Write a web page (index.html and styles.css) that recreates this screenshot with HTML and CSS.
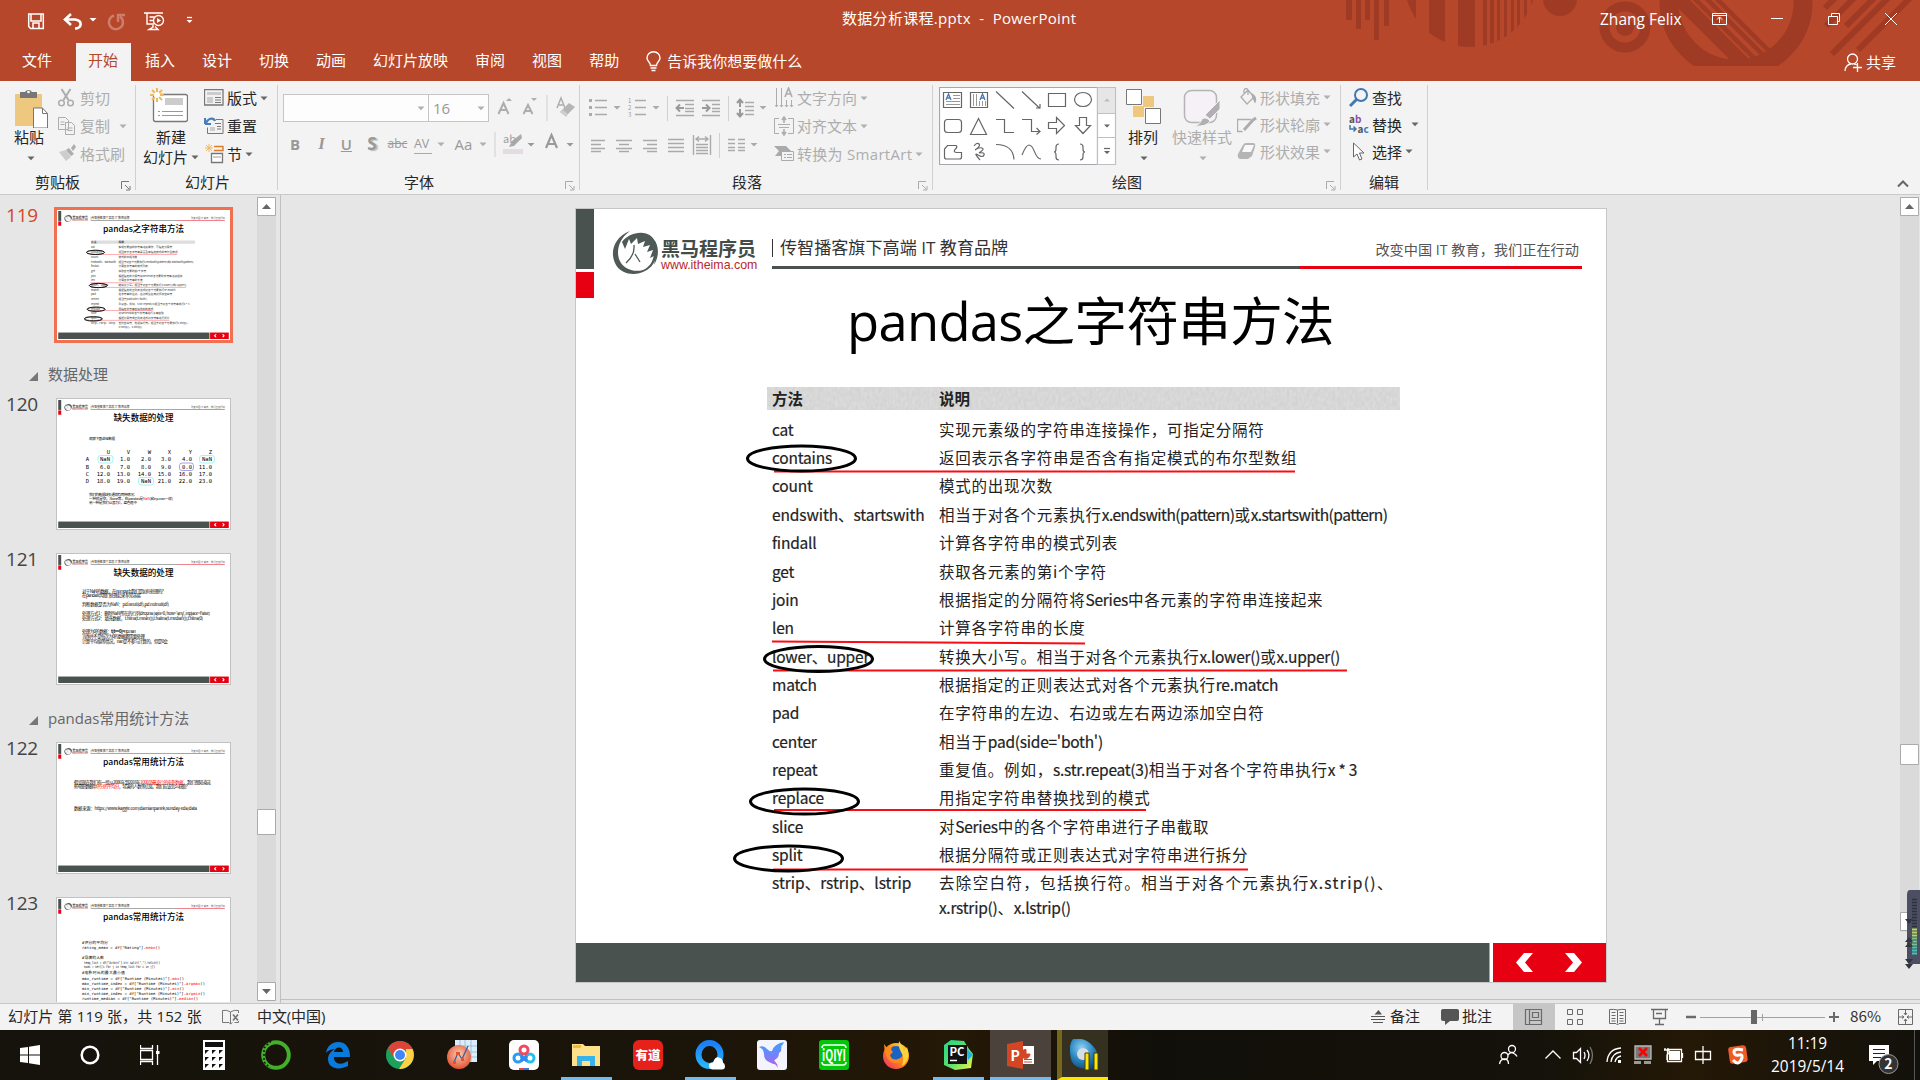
FILE: index.html
```html
<!DOCTYPE html>
<html lang="zh-CN">
<head>
<meta charset="utf-8">
<title>数据分析课程.pptx - PowerPoint</title>
<link rel="stylesheet" href="styles.css">
</head>
<body>
<svg class="defs" width="0" height="0">
  <defs>
    <linearGradient id="gBlue" x1="0" y1="0" x2="0" y2="1"><stop offset="0" stop-color="#1b7ff5"/><stop offset="1" stop-color="#29b4fb"/></linearGradient>
    <linearGradient id="gBird" x1="0" y1="0" x2="0" y2="1"><stop offset="0" stop-color="#3aa0ff"/><stop offset="1" stop-color="#a06bf5"/></linearGradient>
    <linearGradient id="gFox" x1="1" y1="0" x2="0" y2="1"><stop offset="0" stop-color="#ffe23a"/><stop offset=".5" stop-color="#ff8a16"/><stop offset="1" stop-color="#f0207a"/></linearGradient>
    <linearGradient id="gPy" x1="0" y1="0" x2="1" y2="1"><stop offset="0" stop-color="#21d789"/><stop offset=".55" stop-color="#5fe06a"/><stop offset="1" stop-color="#fcf84a"/></linearGradient>
    <radialGradient id="gAudio" cx=".4" cy=".3" r=".8"><stop offset="0" stop-color="#8ed0f2"/><stop offset=".5" stop-color="#2a86c0"/><stop offset="1" stop-color="#0b3f70"/></radialGradient>
    <radialGradient id="gGraph" cx=".5" cy=".4" r=".6"><stop offset="0" stop-color="#f9cdb8"/><stop offset="1" stop-color="#e2532f"/></radialGradient>
    <clipPath id="stripeClip"><circle cx="130" cy="-18.7" r="65.7"/></clipPath>
    <clipPath id="ringClip"><circle cx="396" cy="2" r="58"/></clipPath>
    <filter id="paper" x="0" y="0" width="1" height="1"><feTurbulence type="fractalNoise" baseFrequency=".35 .2" numOctaves="2" seed="4"/><feColorMatrix values="0 0 0 0 .5  0 0 0 0 .5  0 0 0 0 .5  .55 0 0 0 -.12"/></filter>
  </defs>
  <symbol id="frame" viewBox="0 0 1030 773">
    <rect width="18" height="60" fill="#4a5250"/><rect y="63" width="18" height="26" fill="#e60012"/>
    <path d="M54 22C38 28 33 44 40 56C46 66 60 67 69 62C80 57 84 42 79 32L77 38C80 48 75 58 67 61C57 64 46 59 43 50C40 40 44 29 54 22z" fill="#4f5957"/>
    <path d="M46 33C52 24 68 20 76 28C83 35 84 46 78 56L80 46L74 49L77 41L71 43L74 36L67 38L69 32L62 35L61 29L55 35L53 30L49 40z" fill="#4f5957"/>
    <path d="M58 36Q59 46 50 54M59 45L64 53" fill="none" stroke="#4f5957" stroke-width="1.300"/>
    <rect x="196" y="57" width="528" height="3" fill="#4a5250"/><rect x="723" y="57" width="283" height="3" fill="#e60012"/>
    <rect y="734" width="913.5" height="39" fill="#4a5250"/><rect x="917" y="734" width="113" height="39" fill="#e60012"/>
    <path d="M948 744h9l-8 9.500 8 9.500h-9l-8-9.500zM989 744h9l8 9.500-8 9.500h-9l8-9.500z" fill="#fff"/>
  </symbol>
  <symbol id="marks" viewBox="0 0 1030 773">
    <path d="M198 262.500H719M196 432.500L509 434.500M197 461.500H771M198 601H570M197 660.500H672" stroke="#f80d14" stroke-width="2" fill="none"/>
    <g fill="none" stroke="#000" stroke-width="3"><ellipse cx="225.500" cy="249.500" rx="54" ry="12.500"/><ellipse cx="242.500" cy="450" rx="54" ry="12.500"/><ellipse cx="228.500" cy="592.500" rx="54" ry="12.500"/><ellipse cx="212.500" cy="649.500" rx="54" ry="12.500"/></g>
  </symbol>
  <symbol id="launch" viewBox="0 0 10 10"><path d="M.5 8V.5H8M4 4l4 4M9 5v4H5" fill="none" stroke="currentColor"/></symbol>
  <symbol id="dd" viewBox="0 0 8 5"><path d="M.5.500h7L4 4.200z" fill="currentColor"/></symbol>
</svg>

<header class="titlebar">
  <svg class="art" width="580" height="66" viewBox="0 0 580 66">
    <g fill="#9f3b24">
      <path d="M6 0h6v20H6zM16 0h5v29h-5zM25 0h5v20h-5zM34 0h5v40h-5zM44 0h5v26h-5z"/>
      <path clip-path="url(#stripeClip)" d="M67 0h9v50h-9zM89 0h16v50H89zM118 0h17v50h-17zM143 0h4v50h-4zM150 0h4v50h-4zM157 0h3v50h-3zM164 0h3v50h-3zM171 0h3v50h-3zM177 0h3v50h-3zM184 0h3v50h-3zM191 0h3v50h-3z"/>
      <circle cx="220" cy="-1" r="17"/><circle cx="285" cy="27" r="9"/>
    </g>
    <g fill="none" stroke="#9f3b24">
      <circle cx="285" cy="27" r="20.500" stroke-width="10"/><circle cx="396" cy="2" r="67" stroke-width="19"/>
      <g clip-path="url(#ringClip)"><path d="M320-20L410 70" stroke-width="14"/><path d="M336-20L426 70M348-20L438 70M358-20L448 70" stroke-width="4.500"/></g>
      <path d="M492 54L560-14M518 50L582-14M506 26L546-14M486 26L530-18M485 8L510-17" stroke-width="6"/>
    </g>
  </svg>
  <div class="titlerow">
    <svg width="200" height="38" viewBox="0 0 200 38" fill="none" stroke="#fff">
      <path d="M28.700 14h14.600v14.500H30.500l-1.800-2zM31 14v7h10v-7M33 28v-5h6v5" stroke-width="1.500"/>
      <path d="M71 14l-6 5.500 6 5.500M65.500 19.500H75c8 1 7 9 0 9" stroke-width="2.600"/>
      <path d="M89.500 18h7l-3.500 3.500z" fill="#fff" stroke="none"/>
      <path d="M114 15.500a7 7 0 1 0 6 1M118 22v-7h7" stroke-width="2.500" opacity=".3"/>
      <path d="M144 13h19M147 13v11h7M149.500 17h5M149.500 20.500h4M153 25v2l-4 2.500h9l-3-3" stroke-width="1.400"/><circle cx="158.500" cy="20.500" r="5" stroke-width="1.300"/><path d="M157 18v5l4-2.500z" fill="#fff" stroke="none"/>
      <path d="M187 17.500h5" stroke-width="1.300"/><path d="M186.500 20h6l-3 3z" fill="#fff" stroke="none"/>
    </svg>
    <span class="doc">数据分析课程.pptx&nbsp; -&nbsp; PowerPoint</span>
    <span class="user">Zhang Felix</span>
    <svg class="win" width="200" height="38" viewBox="0 0 200 38" fill="none" stroke="#fff">
      <path d="M2.500 13.500h14v11h-14zM2.500 15.500h14M9.500 23v-6M7 19.500l2.500-2.500 2.500 2.500M61 18.500h12M118.500 16.500h9v8h-9zM121.500 16v-2.500h8v8h-2M175 13l12 12M187 13l-12 12"/>
    </svg>
  </div>
  <nav class="tabs">
    <span class="tab file">文件</span><span class="tab on">开始</span><span class="tab">插入</span><span class="tab">设计</span><span class="tab">切换</span><span class="tab">动画</span><span class="tab">幻灯片放映</span><span class="tab">审阅</span><span class="tab">视图</span><span class="tab">帮助</span>
    <svg class="bulb" width="15" height="21" viewBox="0 0 15 21" fill="none" stroke="#fff" stroke-width="1.400"><path d="M4.500 14.500C4.500 11 1 10.500 1 7a6.500 6.300 0 0 1 13 0c0 3.500-3.500 4-3.500 7.500zM4.500 17h6M5.500 19.500h4"/></svg>
    <span class="tell">告诉我你想要做什么</span>
    <span class="share"><svg width="19" height="19" viewBox="0 0 19 19" fill="none" stroke="#fff" stroke-width="1.300"><circle cx="8.500" cy="6" r="5"/><path d="M1 18c0-4 3-7 6-7M10 11l3 1M13.500 10v9M9 14.500h9"/></svg>共享</span>
  </nav>
</header>

<section class="ribbon">
  <div class="group" style="width:136px">
    <div class="body">
      <div class="big" style="width:58px">
        <svg width="36" height="40" viewBox="0 0 36 40"><path d="M1 6h27v32H1z" fill="#edc87e"/><path d="M6 4h5a4 4 0 0 1 7 0h5v6H6z" fill="#777"/><circle cx="14.500" cy="4" r="1.300" fill="#fff"/><path d="M19.500 20h9l5 5.500V40h-14z" fill="#fff" stroke="#777"/><path d="M28.500 20v5.500h5" fill="none" stroke="#777"/></svg>
        <span>粘贴</span><svg class="dd low" width="8" height="5"><use href="#dd"/></svg>
      </div>
      <div class="col off">
        <div><svg width="22" height="20" viewBox="0 0 22 20" fill="none" stroke="currentColor" stroke-width="1.500"><circle cx="3.500" cy="15" r="2.800"/><circle cx="12.500" cy="15" r="2.800"/><path d="M3.500 1l7 11M12.500 1l-7 11" stroke-width="2"/></svg>剪切</div>
        <div><svg width="22" height="20" viewBox="0 0 22 20" fill="#f3f3f3" stroke="currentColor"><path d="M.5 1.500h7l3 3v9H.500zM7.500 6.500h6l3 3v9h-9z"/><path d="M2.500 6h4M2.500 8.500h4M9.500 12h5M9.500 14.500h5"/></svg>复制<svg class="dd gap" width="8" height="5"><use href="#dd"/></svg></div>
        <div><svg width="22" height="20" viewBox="0 0 22 20" fill="currentColor"><path d="M1 8l7 9 5-4-5-7z" opacity=".55"/><path d="M8 6l3-2 5 6-3 2zM13 4l3-4 2 3-3 4z"/></svg>格式刷</div>
      </div>
    </div>
    <div class="label" style="padding-left:35px">剪贴板</div><svg class="launch" width="10" height="10"><use href="#launch"/></svg>
  </div>
  <div class="group slides" style="width:142px">
    <div class="body">
      <div class="big" style="width:60px">
        <svg width="38" height="40" viewBox="0 0 38 40"><rect x="3.500" y="6.500" width="34" height="27" rx="2" fill="#fff" stroke="#777" stroke-width="1.300"/><path d="M15 10h18v7H15z" fill="#ccc"/><path d="M8 23.500h2M12 23.500h21M8 27.500h2M12 27.500h21" stroke="#999"/><path d="M7 0v14M0 7h14M2 2l10 10M12 2L2 12" stroke="#f0b95e" stroke-width="2"/><circle cx="7" cy="7" r="3" fill="#fff"/></svg>
        <span>新建</span><span class="two">幻灯片<svg class="dd" width="8" height="5"><use href="#dd"/></svg></span>
      </div>
      <div class="col">
        <div><svg width="23" height="18" viewBox="0 0 23 18" fill="none" stroke="#777"><path d="M.5.500h18.500v15.500H.500z" stroke-width="1.300"/><path d="M3 3h14v3H3zM3 8h6v6H3z" fill="#ccc" stroke="none"/><path d="M11 8.500h6M11 11h6M11 13.500h6"/></svg>版式<svg class="dd" width="8" height="5"><use href="#dd"/></svg></div>
        <div><svg width="23" height="18" viewBox="0 0 23 18" fill="none" stroke="#777"><path d="M12 2.500h7v14H3.500v-6"/><path d="M6 10h5v4H6z" fill="#ccc" stroke="none"/><path d="M11 6.500h6M13 9.500h4M13 12h4"/><path d="M1 7V1M1 7h6M2 6c3-6 8-5 9-2" stroke="#4a7ebb" stroke-width="2.200"/></svg>重置</div>
        <div><svg width="23" height="20" viewBox="0 0 23 20" fill="none" stroke="#777"><path d="M10 2.500h9M10 6.500h9V2" stroke="#e07b28" stroke-width="1.400"/><path d="M7.500 9.500h11v9h-11z" fill="#fff" stroke-width="1.300"/><path d="M9 12h8v2H9z" fill="#ccc" stroke="none"/><path d="M5 0v8M1 4h8M2 1l6 6M8 1L2 7" stroke="#f0b95e"/></svg>节<svg class="dd" width="8" height="5"><use href="#dd"/></svg></div>
      </div>
    </div>
    <div class="label" style="padding-left:49px">幻灯片</div>
  </div>
  <div class="group" style="width:302px">
    <div class="body rows off">
      <div class="combos"><span class="combo" style="width:146px"><svg class="dd" width="8" height="5"><use href="#dd"/></svg></span><span class="combo" style="width:61px">16<svg class="dd" width="8" height="5"><use href="#dd"/></svg></span>
        <svg width="86" height="28" viewBox="0 0 86 28"><g fill="none" stroke="currentColor" stroke-width="2"><path d="M8.500 20l5-11 5 11M10 16h7M33.500 20l4.500-9 4.500 9M35 17h6"/></g><path d="M16 7l3-3 3 3zM41 4h6l-3 3z" fill="currentColor"/><path d="M57 1v26" stroke="#d0d0d0"/><path d="M67 14l4-10 4 10M69 11h4" fill="none" stroke="currentColor" stroke-width="1.500"/><path d="M70 18l9-9 6 4-9 9z" fill="#b5b5b5"/><path d="M70 18l3-2 5 4-2 3z" fill="#d0cdd0"/></svg>
      </div>
      <div class="fmt"><b style="width:27px">B</b><i style="width:25px">I</i><u style="width:27px">U</u><b class="sh" style="width:21px">S</b><s style="width:27px">abc</s><span class="av" style="width:18px">AV</span><svg class="dd" width="8" height="5"><use href="#dd"/></svg><span style="width:20px;margin-left:10px">Aa</span><svg class="dd" width="8" height="5"><use href="#dd"/></svg>
        <svg class="hl" width="92" height="28" viewBox="0 0 92 28"><path d="M8 2v25" stroke="#d0d0d0"/><rect x="16" y="19" width="20" height="5" fill="#e3dde3"/><path d="M22 17l3-6 9-7 1 4-8 8z" fill="#aaa"/><text x="16" y="12.500" font-size="11" fill="#a0a0a0">ab</text><path d="M40.500 13h7l-3.500 3.500zM79.500 13h7L83 16.500z" fill="currentColor"/><path d="M59 18l5.500-13L70 18M61 14h7" fill="none" stroke="#999" stroke-width="2.200"/></svg>
      </div>
    </div>
    <div class="label" style="padding-left:126px">字体</div><svg class="launch off" width="10" height="10"><use href="#launch"/></svg>
  </div>
  <div class="group" style="width:353px">
    <div class="body off">
      <svg class="para" width="194" height="85" viewBox="580 83 194 85" fill="none" stroke="#aaa" stroke-width="1.400">
        <path d="M595 100.500h12M595 107.500h12M595 114.500h12M635 100.500h11M635 107.500h11M635 114.500h11"/>
        <path d="M589 99h3v3h-3zM589 106h3v3h-3zM589 113h3v3h-3zM613.500 106h7l-3.500 3.500zM652.500 106h7l-3.500 3.500zM759.500 106h7l-3.500 3.500zM750.500 143h7l-3.500 3.500z" fill="#aaa" stroke="none"/>
        <g fill="#999" stroke="none" font-size="6"><text x="628" y="103">1</text><text x="628" y="110">2</text><text x="628" y="117">3</text></g>
        <path d="M667.500 96v25M728.500 96v25M719.500 133v25" stroke="#d0d0d0" stroke-width="1"/>
        <path d="M676 100.500h18M685 104.500h9M685 108.500h9M685 111.500h9M676 115.500h18M702 100.500h18M712 104.500h8M712 108.500h8M712 111.500h8M702 115.500h18"/>
        <path d="M684 108h-7M680 104.500l-3.500 3.500 3.500 3.500M702 108h7M706 104.500l3.500 3.500-3.500 3.500M740 100v7M737 103l3-3.500 3 3.500M740 109v7M737 113l3 3.500 3-3.500" stroke="#999" stroke-width="2"/>
        <path d="M745 102.500h9M745 106.500h9M745 110.500h9M745 114.500h9"/>
        <path d="M591 140.500h14M591 144.500h10M591 148.500h14M591 151.500h10M616 140.500h16M619 144.500h10M616 148.500h16M619 151.500h10M643 140.500h14M647 144.500h10M643 148.500h14M647 151.500h10M668 139.500h16M668 143.500h16M668 147.500h16M668 151.500h16M693.500 135v20M710.500 135v20M696 144.500h12M696 147.500h12M696 150.500h12M696 153.500h12M697 139h10M699 136.500l-3 2.500 3 2.500M705 136.500l3 2.500-3 2.500M728 139.500h7M728 143.500h7M728 147.500h7M728 150.500h7M738 139.500h7M738 143.500h7M738 147.500h7M738 150.500h7"/>
      </svg>
      <div class="col">
        <div><svg width="23" height="22" viewBox="0 0 23 22" fill="none" stroke="currentColor"><path d="M2.500 1v19M7.500 1v19M12.500 13v7M17.500 13v7M1 18l1.500 2L4 18M6 18l1.500 2L9 18M11 18l1.500 2 1.500-2M16 18l1.500 2 1.500-2"/><path d="M11 10l3.500-9L18 10M12 7h5" stroke-width="1.600"/></svg>文字方向<svg class="dd" width="8" height="5"><use href="#dd"/></svg></div>
        <div><svg width="23" height="20" viewBox="0 0 23 20" fill="none" stroke="currentColor"><path d="M5 2.500H.500v15H5M14 2.500h5.500v15H14M4 8.500h12M5 11.500h10"/><path d="M10 1v6M8 4l2-3 2 3M10 13v6M8 16l2 3 2-3" stroke-width="1.600"/></svg>对齐文本<svg class="dd" width="8" height="5"><use href="#dd"/></svg></div>
        <div><svg width="23" height="18" viewBox="0 0 23 18"><path d="M0 1h12l5 5h-8v5H1l4-5z" fill="#aaa"/><path d="M7.500 6.500h12v9h-12z" fill="#f3f3f3" stroke="#aaa"/><path d="M10 9.500h2M13 9.500h5M10 12.500h2M13 12.500h5" stroke="#aaa"/></svg><span class="smart">转换为 SmartArt</span><svg class="dd" width="8" height="5"><use href="#dd"/></svg></div>
      </div>
    </div>
    <div class="label" style="padding-left:152px">段落</div><svg class="launch off" width="10" height="10"><use href="#launch"/></svg>
  </div>
  <div class="group" style="width:408px">
    <div class="body">
      <svg class="gallery" width="178" height="80" viewBox="939 86 178 80" fill="none" stroke="#666" stroke-width="1.200">
        <path d="M939.500 87.500h158v77h-158z" fill="#fff" stroke="#a6a6b0"/><path d="M1097.500 87.500h18v77h-18z" fill="#fff" stroke="#c0c0c0"/><path d="M1098 88h17v25h-17z" fill="#e6e6e6" stroke="none"/><path d="M1098 113.500h18M1098 137.500h18" stroke="#c0c0c0"/>
        <path d="M1104 101.500h6l-3-3z" fill="#bbb" stroke="none"/><path d="M1104 124.500h6l-3 3zM1104 151h6l-3 3z" fill="#666" stroke="none"/><path d="M1104 148.500h6"/>
        <path d="M943.500 92.500h18v15h-18zM970.500 92.500h17v15h-17zM996 91.500l18 17M1022 91.500l18 17M1036 108h4v-4M1048.500 93.500h17v13h-17z"/><ellipse cx="1083" cy="99.500" rx="8.500" ry="7"/>
        <path d="M953 95.500h7M953 98.500h7M946 101.500h14M946 104.500h14M973.500 94v12M976.500 94v12M979.500 101v5M982.500 101v5M985.500 101v5" stroke="#999" stroke-width="1"/>
        <path d="M946 100l2.500-6 2.500 6M947 98h3M980 100l2.500-6 2.500 6M981 98h3" stroke="#4a7ebb" stroke-width="1.400"/>
        <rect x="944.500" y="119.500" width="17" height="13" rx="3"/><path d="M978.500 118.500l8 16h-16zM996 119.500h8.500v13h9.500M1022 119.500h9.500v12h8M1036.500 128l3.500 3.500-3.500 3M1048.500 122.500h8v-5l8 8-8 8v-5h-8zM1079.500 117.500h7v8h4l-7.500 8-7.500-8h4zM947.500 145.500h8.500q2 1.500-1 4-2 3 2 3h4.500v4.500q0 2-2 2h-13q-2 0-2-2v-8zM974 146q3-4 5-2t-4 6q4-3 7-2t-3 5q6-1 5 2t-6 0 2 5M996 144.500q17 0 18 15M1022 155q4-10 7-10c6 0 5 14 12 14M1059 144q-3 0-3 3v2q0 3-2 3 2 0 2 3v2q0 3 3 3M1080 144q3 0 3 3v2q0 3 2 3-2 0-2 3v2q0 3-3 3"/>
      </svg>
      <div class="big mid" style="width:52px">
        <svg width="36" height="40" viewBox="0 0 36 40"><path d="M18 8h11v11H18zM8 18h11v11H8z" fill="#edc87e"/><path d="M1.500 1.500h15v15h-15zM20.500 20.500h15v15h-15z" fill="#fff" stroke="#777"/></svg>
        <span>排列</span><svg class="dd low" width="8" height="5"><use href="#dd"/></svg>
      </div>
      <div class="big mid wide off" style="width:62px">
        <svg width="40" height="40" viewBox="0 0 40 40"><rect x="2.500" y="2.500" width="32" height="32" rx="7" fill="#f5f1f6" stroke="#b5b5b5" stroke-width="1.500"/><path d="M38 12v9L28 31l-5-4zM12 38q6-1 8-7 4-3 8 2-3 6-16 5z" fill="#b0b0b0" stroke="#f3f3f3"/></svg>
        <span>快速样式</span><svg class="dd low" width="8" height="5"><use href="#dd"/></svg>
      </div>
      <div class="col tight off" style="margin-left:4px">
        <div><svg width="23" height="20" viewBox="0 0 23 20" fill="none" stroke="currentColor" stroke-width="1.300"><path d="M4 9l7-7 6 7-7 7zM7 5V2q2-3 4 0v5"/><path d="M15 6q5 3 3 8l-2-4z" fill="currentColor"/></svg>形状填充<svg class="dd" width="8" height="5"><use href="#dd"/></svg></div>
        <div><svg width="23" height="18" viewBox="0 0 23 18" fill="none" stroke="currentColor" stroke-width="1.300"><path d="M14 3.500H.500v12h5"/><path d="M7 14l9-10 3-2" stroke-width="3"/></svg>形状轮廓<svg class="dd" width="8" height="5"><use href="#dd"/></svg></div>
        <div><svg width="23" height="20" viewBox="0 0 23 20"><path d="M1 12l5-9q1-2 3-2h7q3 0 2 4l-3 9-4 3H3q-3-1-2-5z" fill="#b5b5b5"/><path d="M5 10l3-7h9l-3 7z" fill="#f8f8f8"/></svg>形状效果<svg class="dd" width="8" height="5"><use href="#dd"/></svg></div>
      </div>
    </div>
    <div class="label" style="padding-left:179px">绘图</div><svg class="launch off" width="10" height="10"><use href="#launch"/></svg>
  </div>
  <div class="group" style="width:87px">
    <div class="body">
      <div class="col tight" style="margin-left:8px">
        <div><svg width="23" height="20" viewBox="0 0 23 20" fill="none" stroke="#3f78b5"><circle cx="12" cy="7" r="6" stroke-width="2"/><path d="M8 11l-7 7" stroke-width="3"/></svg>查找</div>
        <div><svg class="swap" width="23" height="20" viewBox="0 0 23 20"><text x="0" y="8" font-size="10" font-weight="700" fill="#555">a<tspan fill="#8c4fa8">b</tspan></text><text x="8.500" y="18" font-size="10" font-weight="700" fill="#555">a<tspan fill="#3f78b5">c</tspan></text><path d="M1 10v4h6M4.500 11.500L7 14l-2.500 2.500" fill="none" stroke="#3f78b5" stroke-width="1.500"/></svg>替换<svg class="dd" style="margin-left:9px" width="8" height="5"><use href="#dd"/></svg></div>
        <div><svg width="23" height="20" viewBox="0 0 23 20"><path d="M4.500 1v14l3.500-3 2.500 6 2.500-1-2.500-6H15z" fill="#fff" stroke="#666"/></svg>选择<svg class="dd" width="8" height="5"><use href="#dd"/></svg></div>
      </div>
    </div>
    <div class="label" style="padding-left:28px">编辑</div>
  </div>
  <svg class="collapse" width="12" height="8" viewBox="0 0 12 8"><path d="M1 6.500l5-5 5 5" fill="none" stroke="#666" stroke-width="2"/></svg>
</section>

<main class="work">
  <aside class="panel">
    <div class="list">
      <div class="item cur"><span class="num">119</span><div class="thumb">
        <svg width="171" height="128" viewBox="0 0 171 128">
          <g id="minihead">
            <use href="#frame" width="171" height="128"/>
            <text x="14.200" y="8.200" font-size="3.400" font-weight="700" textLength="15.800" lengthAdjust="spacingAndGlyphs" fill="#444">黑马程序员</text>
            <text x="14.200" y="10" font-size="2" textLength="15.800" lengthAdjust="spacingAndGlyphs" fill="#b22">www.itheima.com</text>
            <text x="32.500" y="7.800" font-size="3" textLength="39" lengthAdjust="spacingAndGlyphs" fill="#333">|传智播客旗下高端 IT 教育品牌</text>
            <text x="133" y="8" font-size="2.600" textLength="34" lengthAdjust="spacingAndGlyphs" fill="#555">改变中国 IT 教育，我们正在行动</text>
          </g>
          <text class="cap" x="45" y="21" textLength="81" lengthAdjust="spacingAndGlyphs">pandas之字符串方法</text>
          <path d="M33 29.500h104v3.300H33z" fill="#ddd"/>
          <g font-size="2.700" fill="#333"><text x="33" y="32.200" font-weight="700">方法</text><text x="60.500" y="32.200" font-weight="700">说明</text>
          <text x="33" y="37.400">cat</text><text x="60.500" y="37.400">实现元素级的字符串连接操作，可指定分隔符</text>
          <text x="33" y="42.100">contains</text><text x="60.500" y="42.100">返回表示各字符串是否含有指定模式的布尔型数组</text>
          <text x="33" y="46.800">count</text><text x="60.500" y="46.800">模式的出现次数</text>
          <text x="33" y="51.500" textLength="25">endswith、startswith</text><text x="60.500" y="51.500" textLength="75">相当于对各个元素执行x.endswith(pattern)或x.startswith(pattern)</text>
          <text x="33" y="56.200">findall</text><text x="60.500" y="56.200">计算各字符串的模式列表</text>
          <text x="33" y="60.900">get</text><text x="60.500" y="60.900">获取各元素的第i个字符</text>
          <text x="33" y="65.600">join</text><text x="60.500" y="65.600">根据指定的分隔符将Series中各元素的字符串连接起来</text>
          <text x="33" y="70.300">len</text><text x="60.500" y="70.300">计算各字符串的长度</text>
          <text x="33" y="75">lower、upper</text><text x="60.500" y="75">转换大小写。相当于对各个元素执行x.lower()或x.upper()</text>
          <text x="33" y="79.700">match</text><text x="60.500" y="79.700">根据指定的正则表达式对各个元素执行re.match</text>
          <text x="33" y="84.400">pad</text><text x="60.500" y="84.400">在字符串的左边、右边或左右两边添加空白符</text>
          <text x="33" y="89.100">center</text><text x="60.500" y="89.100">相当于pad(side='both')</text>
          <text x="33" y="93.800">repeat</text><text x="60.500" y="93.800">重复值。例如，s.str.repeat(3)相当于对各个字符串执行x * 3</text>
          <text x="33" y="98.500">replace</text><text x="60.500" y="98.500">用指定字符串替换找到的模式</text>
          <text x="33" y="103.200">slice</text><text x="60.500" y="103.200">对Series中的各个字符串进行子串截取</text>
          <text x="33" y="107.900">split</text><text x="60.500" y="107.900">根据分隔符或正则表达式对字符串进行拆分</text>
          <text x="33" y="112.800">strip、rstrip、lstrip</text><text x="60.500" y="112.800">去除空白符，包括换行符。相当于对各个元素执行x.strip()、</text><text x="60.500" y="116.800">x.rstrip()、x.lstrip()</text></g>
          <use href="#marks" width="171" height="128"/>
          <g fill="none" stroke="#000" stroke-width=".8"><ellipse cx="37.500" cy="41.400" rx="9" ry="2.100"/><ellipse cx="40.300" cy="74.500" rx="9" ry="2.100"/><ellipse cx="38.200" cy="98.300" rx="9" ry="2.100"/><ellipse cx="35.300" cy="108" rx="9" ry="2.100"/></g>
        </svg></div></div>
      <div class="sect"><i></i>数据处理</div>
      <div class="item"><span class="num">120</span><div class="thumb">
        <svg width="171" height="128" viewBox="0 0 171 128"><use href="#minihead"/>
          <text class="cap" x="55.500" y="21" textLength="60" lengthAdjust="spacingAndGlyphs">缺失数据的处理</text>
          <text x="31" y="39.500" font-size="3.600" textLength="26">观察下面这组数据</text>
          <g class="mono" font-size="5.500" text-anchor="end"><text x="52" y="54">U</text><text x="72" y="54">V</text><text x="93" y="54">W</text><text x="113" y="54">X</text><text x="134" y="54">Y</text><text x="154" y="54">Z</text>
          <text x="31" y="61">A</text><text x="52" y="61">NaN</text><text x="72" y="61">1.0</text><text x="93" y="61">2.0</text><text x="113" y="61">3.0</text><text x="134" y="61">4.0</text><text x="154" y="61">NaN</text>
          <text x="31" y="68.500">B</text><text x="52" y="68.500">6.0</text><text x="72" y="68.500">7.0</text><text x="93" y="68.500">8.0</text><text x="113" y="68.500">9.0</text><text x="134" y="68.500">0.0</text><text x="154" y="68.500">11.0</text>
          <text x="31" y="75.500">C</text><text x="52" y="75.500">12.0</text><text x="72" y="75.500">13.0</text><text x="93" y="75.500">14.0</text><text x="113" y="75.500">15.0</text><text x="134" y="75.500">16.0</text><text x="154" y="75.500">17.0</text>
          <text x="31" y="83">D</text><text x="52" y="83">18.0</text><text x="72" y="83">19.0</text><text x="93" y="83">NaN</text><text x="113" y="83">21.0</text><text x="134" y="83">22.0</text><text x="154" y="83">23.0</text></g>
          <g fill="none" stroke="#8cf0f4" stroke-width=".8"><rect x="40" y="55.500" width="15" height="7.500" rx="2.500"/><rect x="141.500" y="55.500" width="15" height="7.500" rx="2.500"/><rect x="80.500" y="77.500" width="15" height="7.500" rx="2.500"/><rect x="121.500" y="63" width="14" height="7.500" rx="2.500" stroke="#8a8ae8"/></g>
          <g font-size="3.600"><text x="31" y="95.500" textLength="48">我们的数据缺失通常有两种情况：</text><text x="31" y="99.500" textLength="84">一种就是空，None等，在pandas是<tspan fill="red">NaN</tspan>(和np.nan一样)</text><text x="31" y="103.500" textLength="48">另一种是我们让其为<tspan fill="red">0</tspan>，蓝色框中</text></g>
        </svg></div></div>
      <div class="item"><span class="num">121</span><div class="thumb">
        <svg width="171" height="128" viewBox="0 0 171 128"><use href="#minihead"/>
          <text class="cap" x="55.500" y="21" textLength="60" lengthAdjust="spacingAndGlyphs">缺失数据的处理</text>
          <g font-size="4.400"><text x="24" y="38" textLength="84">对于NaN的数据，在numpy中我们是如何处理的？</text><text x="24" y="42" textLength="59">在pandas中我们处理起来非常容易</text><text x="24" y="51" textLength="87">判断数据是否为NaN：pd.isnull(df),pd.notnull(df)</text><text x="24" y="60" textLength="128">处理方式1：删除NaN所在的行列dropna (axis=0, how='any', inplace=False)</text><text x="24" y="65" textLength="121">处理方式2：填充数据，t.fillna(t.mean()),t.fiallna(t.median()),t.fillna(0)</text><text x="24" y="78" textLength="54">处理为0的数据：<tspan font-weight="700">t[t==0]=</tspan>np.nan</text><text x="24" y="83" textLength="63">当然并不是每次为0的数据都需要处理</text><text x="24" y="88" textLength="86">计算平均值等情况，nan是不参与计算的，但是0会</text></g>
        </svg></div></div>
      <div class="sect second"><i></i>pandas常用统计方法</div>
      <div class="item"><span class="num">122</span><div class="thumb">
        <svg width="171" height="128" viewBox="0 0 171 128"><use href="#minihead"/>
          <text class="cap" x="45" y="21" textLength="81" lengthAdjust="spacingAndGlyphs">pandas常用统计方法</text>
          <g font-size="4.400"><text x="16" y="39.500" textLength="137">假设现在我们有一组从2006年到2016年<tspan fill="red">1000部最流行的电影数据</tspan>，我们想知道这</text><text x="16" y="44" textLength="116">些电影数据中<tspan fill="red">评分的平均分</tspan>，导演的人数等信息，我们应该怎么获取？</text><text x="16" y="66" textLength="123">数据来源：https://www.kaggle.com/damianpanek/sunday-eda/data</text></g>
        </svg></div></div>
      <div class="item"><span class="num">123</span><div class="thumb">
        <svg width="171" height="128" viewBox="0 0 171 128"><use href="#minihead"/>
          <text class="cap" x="45" y="21" textLength="81" lengthAdjust="spacingAndGlyphs">pandas常用统计方法</text>
          <g class="mono" font-size="3.900"><text x="24" y="44.500" textLength="26">#评分的平均分</text><text x="24" y="49.500" textLength="78">rating_mean = df["Rating"].<tspan fill="red">mean</tspan>()</text><text x="24" y="59.500" textLength="22">#导演的人数</text><text x="26" y="64.500" textLength="76" lengthAdjust="spacingAndGlyphs">temp_list = df["Actors"].str.split(",").tolist()</text><text x="26" y="69" textLength="71" lengthAdjust="spacingAndGlyphs">nums = set([i for j in temp_list for i in j])</text><text x="24" y="75" textLength="43">#电影时长的最大最小值</text><text x="24" y="80.500" textLength="102">max_runtime = df["Runtime (Minutes)"].<tspan fill="red">max</tspan>()</text><text x="24" y="85.500" textLength="123">max_runtime_index = df["Runtime (Minutes)"].<tspan fill="red">argmax</tspan>()</text><text x="24" y="90.500" textLength="102">min_runtime = df["Runtime (Minutes)"].<tspan fill="red">min</tspan>()</text><text x="24" y="95.500" textLength="123">min_runtime_index = df["Runtime (Minutes)"].<tspan fill="red">argmin</tspan>()</text><text x="24" y="100.500" textLength="116">runtime_median = df["Runtime (Minutes)"].<tspan fill="red">median</tspan>()</text></g>
        </svg></div></div>
    </div>
    <svg class="scroll" width="19" height="804" viewBox="0 0 19 804"><path d="M0 0h19v804H0z" fill="#dadada"/><g fill="#fff" stroke="#ababab"><path d="M.5.500h18v18H.500zM.500 612.500h18v25H.500zM.500 785.500h18v18H.500z"/></g><path d="M5 12h9l-4.500-5zM5 792h9l-4.500 5z" fill="#666"/></svg>
  </aside>
  <div class="stage">
    <div class="slide">
      <svg class="over" width="1030" height="773"><use href="#frame"/></svg>
      <div class="shead"><div class="brand"><b>黑马程序员</b><span>www.itheima.com</span></div><span class="slogan"><i></i>传智播客旗下高端 IT 教育品牌</span><span class="motto">改变中国 IT 教育，我们正在行动</span></div>
      <h1>pandas<span>之字符串方法</span></h1>
      <div class="table">
        <div class="th"><svg width="633" height="23"><rect width="633" height="23" fill="#dcdcdc"/><rect width="633" height="23" filter="url(#paper)"/></svg><b>方法</b><b>说明</b></div>
        <div class="tr"><span>cat</span><span>实现元素级的字符串连接操作，可指定分隔符</span></div>
        <div class="tr"><span>contains</span><span>返回表示各字符串是否含有指定模式的布尔型数组</span></div>
        <div class="tr"><span>count</span><span>模式的出现次数</span></div>
        <div class="tr dense"><span>endswith、startswith</span><span>相当于对各个元素执行<em>x.endswith(pattern)</em>或<em>x.startswith(pattern)</em></span></div>
        <div class="tr"><span>findall</span><span>计算各字符串的模式列表</span></div>
        <div class="tr"><span>get</span><span>获取各元素的第i个字符</span></div>
        <div class="tr"><span>join</span><span>根据指定的分隔符将<em>Series</em>中各元素的字符串连接起来</span></div>
        <div class="tr"><span>len</span><span>计算各字符串的长度</span></div>
        <div class="tr"><span>lower、upper</span><span>转换大小写。相当于对各个元素执行<em>x.lower()</em>或<em>x.upper()</em></span></div>
        <div class="tr"><span>match</span><span>根据指定的正则表达式对各个元素执行<em>re.match</em></span></div>
        <div class="tr"><span>pad</span><span>在字符串的左边、右边或左右两边添加空白符</span></div>
        <div class="tr"><span>center</span><span>相当于<em>pad(side='both')</em></span></div>
        <div class="tr"><span>repeat</span><span>重复值。例如，<em>s.str.repeat(3)</em>相当于对各个字符串执行<em>x * 3</em></span></div>
        <div class="tr"><span>replace</span><span>用指定字符串替换找到的模式</span></div>
        <div class="tr"><span>slice</span><span>对<em>Series</em>中的各个字符串进行子串截取</span></div>
        <div class="tr"><span>split</span><span>根据分隔符或正则表达式对字符串进行拆分</span></div>
        <div class="tr loose"><span>strip、rstrip、lstrip</span><span>去除空白符，包括换行符。相当于对各个元素执行<em>x.strip()</em>、</span></div>
        <div class="tr last"><span></span><span><em>x.rstrip()</em>、<em>x.lstrip()</em></span></div>
      </div>
      <svg class="over" width="1030" height="773"><use href="#marks"/></svg>
    </div>
    <svg class="vscroll" width="20" height="804" viewBox="0 0 20 804"><path d="M0 0h19v735H0z" fill="#dadada"/><g fill="#fff" stroke="#ababab"><path d="M.5.500h18v18H.500zM.500 547.500h18v20H.500zM.500 715.500h18v18H.500z"/></g><path d="M5 12h9l-4.500-5z" fill="#666"/>
      <path d="M20 693h-10q-3 0-3 5v64q0 5 3 5h10z" fill="#4b4f61"/><path d="M12 702.500h5M12 705.500h5M12 708.500h5M12 711.500h5M12 714.500h5M12 717.500h5M12 720.500h5M12 723.500h5M12 726.500h5M12 729.500h5" stroke="#2d3040" stroke-width="1.500"/><path d="M12 732.500h5M12 735.500h5M12 738.500h5" stroke="#b5d65f" stroke-width="2"/><path d="M12 741.500h5M12 744.500h5M12 747.500h5" stroke="#6fc989" stroke-width="2"/><path d="M12 750.500h5M12 753.500h5M12 756.500h5" stroke="#45c4b8" stroke-width="2"/>
      <path d="M5 722h8l-4 5zM5 745h8l-4-5zM5 750h8l-4-5zM5 762h8l-4 5zM5 767h8l-4 5z" fill="#33353f"/></svg>
  </div>
</main>

<footer class="status">
  <span class="s1">幻灯片 第 119 张，共 152 张</span>
  <svg class="s2" width="18" height="16" viewBox="0 0 18 16" fill="none" stroke="#777"><path d="M8.500 15V3Q5 .500.500 1.500v12H7l1.500 1.500 2-1.500M8.500 3Q12 .500 16.500 1.500V4M16.500 12v1.500h-4"/><path d="M11 5.500l5 6M16 5.500l-5 6" stroke-width="1.700"/></svg>
  <span class="s3">中文(中国)</span>
  <div class="sright">
    <svg width="19" height="16" viewBox="0 0 19 16"><path d="M3.500 5.500l4-4.500 3.500 4.500z" fill="#555"/><path d="M0 7.500h14M0 10.500h14M2 13.500h10" stroke="#555"/></svg><span style="width:51px">备注</span>
    <svg width="21" height="18" viewBox="0 0 21 18"><path d="M2 1h14q2 0 2 2v8q0 2-2 2H9l-5 4v-4H2q-2 0-2-2V3q0-2 2-2z" fill="#555"/></svg><span style="width:51px">批注</span>
    <svg width="407" height="27" viewBox="1513 0 407 27" fill="none" stroke="#6a6a6a">
      <path d="M1513 0h42v27h-42z" fill="#c6c6c6" stroke="none"/><path d="M1525.500 5.500h16v15h-16zM1529.500 6v14M1532.500 8.500h6v5h-6zM1530 16.500h11" stroke-width="1.200"/>
      <path d="M1567.500 5.500h5v5h-5zM1577.500 5.500h5v5h-5zM1567.500 15.500h5v5h-5zM1577.500 15.500h5v5h-5z"/>
      <path d="M1617.500 19.500V6q-4-1-8-.5v14h6.500l1.500 1.500 1.500-1.500h6.500v-14q-4-.5-8 .5M1611.500 8.500h4M1611.500 11.500h4M1611.500 14.500h4M1611.500 17h4M1619.500 8.500h4M1619.500 11.500h4M1619.500 14.500h4M1619.500 17h4"/>
      <path d="M1651 5.500h17M1653.500 6v8.500h12V6M1656 9.500h6M1659.500 15v5.500M1655 20.500h9" stroke-width="1.300"/>
      <path d="M1686 13h10" stroke-width="2.500"/><path d="M1700 13.500h125M1762.500 10v7" stroke="#a0a0a0"/><path d="M1751 6h6v14h-6z" fill="#666" stroke="none"/><path d="M1829 13h10M1834 8v10" stroke-width="2"/>
      <text x="1850" y="18" font-size="14.500" textLength="31" lengthAdjust="spacingAndGlyphs" fill="#333" stroke="none">86%</text>
      <path d="M1898.500 5.500h14v15h-14zM1905.500 6v5M1905.500 15v5M1899 13h5M1907 13h5M1904 9l1.500 2 1.500-2M1904 17l1.500-2 1.500 2M1902 11.500l2 1.500-2 1.500M1909 11.500l-2 1.500 2 1.500"/>
    </svg>
  </div>
</footer>

<footer class="taskbar">
  <div class="cell sys"><svg width="20" height="20" viewBox="0 0 20 20"><path d="M0 3l8-1v7.500H0zM9 1.800L20 0v9.500H9zM0 10.500h8V18l-8-1zM9 10.500h11V20L9 18.200z" fill="#fff"/></svg></div>
  <div class="cell sys"><svg width="20" height="20"><circle cx="10" cy="10" r="8.300" fill="none" stroke="#fff" stroke-width="2.500"/></svg></div>
  <div class="cell sys last"><svg width="20" height="20" viewBox="0 0 20 20" fill="none" stroke="#fff"><path d="M.5 0v3.500h12V0M.500 20v-3.500h12V20M.500 5.500h12v9H.500zM17.500 0v20" stroke-width="1.300"/><path d="M16 6h3.500v3H16z" fill="#fff" stroke="none"/></svg></div>
  <div class="cell"><svg width="22" height="30" viewBox="0 0 22 30"><path d="M0 0h22v30H0z" fill="#fff"/><path d="M2 2h18v5H2zM2 10h4l-4 4zM9 10h4l-4 4zM16 10h4l-4 4zM2 17h4l-4 4zM9 17h4l-4 4zM16 17h4l-4 4zM2 24h4l-4 4zM9 24h4l-4 4zM16 24h4l-4 4z" fill="#111"/></svg></div>
  <div class="cell"><svg width="30" height="30" viewBox="0 0 30 30"><circle cx="15" cy="15" r="12.800" fill="none" stroke="#43b02a" stroke-width="4"/><path d="M10 1L3 8v14l6 6" fill="none" stroke="#14120c" stroke-width="1.500" stroke-dasharray="2 2"/></svg></div>
  <div class="cell"><svg width="26" height="28" viewBox="0 0 26 28"><path d="M1 12C2 5 7 1 13 1c8 0 12 6 12 15H9c0 8 8 8 14 4v5c-10 5-20 2-20-7 0-5 4-9 8-10-7 0-9 3-10 4zm8-1h9c0-6-8-6-9 0z" fill="#0a7bdc" fill-rule="evenodd"/></svg></div>
  <div class="cell"><svg width="28" height="28" viewBox="0 0 28 28"><circle cx="14" cy="14" r="14" fill="#1da05b"/><path d="M2 7a14 14 0 0 1 24.500 1H14L8 17z" fill="#db4437"/><path d="M26.500 8A14 14 0 0 1 13 28l7-11V8z" fill="#fdd045"/><circle cx="14" cy="14" r="6.500" fill="#fff"/><circle cx="14" cy="14" r="5" fill="#4285f4"/></svg></div>
  <div class="cell"><svg width="30" height="30" viewBox="0 0 30 30"><path d="M8 0h22v22H8z" fill="#dcecf8"/><path d="M13 0v22M18 0v22M24 0v22M8 6h22M8 12h22M8 17h22" stroke="#9cc0dc"/><circle cx="12" cy="17" r="12" fill="url(#gGraph)"/><path d="M7 22l4-9 4 6 6-13" fill="none" stroke="#34609c" stroke-width="1.200"/><path d="M9 12h4v3H9zM14 18h3v3h-3zM6 21h3v3H6z" fill="#e2532f"/></svg></div>
  <div class="cell"><svg width="30" height="30" viewBox="0 0 30 30"><rect width="30" height="30" rx="5" fill="#fff"/><path d="M10 28h5v2h-5z" fill="#e44"/><path d="M15 28h5v2h-5z" fill="#37e"/><g fill="none" stroke-width="3"><circle cx="9" cy="18" r="4" stroke="#2a9af3"/><circle cx="21" cy="18" r="4" stroke="#27bdf2"/><circle cx="15" cy="10" r="4" stroke="#ef4a5f"/><path d="M12 16l6 5M18 16l-6 5" stroke="#2b8cf0"/></g></svg></div>
  <div class="cell run"><svg width="28" height="24" viewBox="0 0 28 24"><path d="M0 1h11l2 2h15v20H0z" fill="#fde08a"/><path d="M1 2h8v3H1z" fill="#f0b93a"/><path d="M5 13h18v10h-5v-5h-8v5H5z" fill="#37b2ea"/></svg></div>
  <div class="cell"><svg width="30" height="30" viewBox="0 0 30 30"><rect width="30" height="30" rx="6" fill="#e52119"/><text x="15" y="20" font-size="12.500" font-weight="900" text-anchor="middle" fill="#fff">有道</text></svg></div>
  <div class="cell run"><svg width="30" height="30" viewBox="0 0 30 30"><ellipse cx="14.500" cy="14.500" rx="11" ry="11.500" fill="none" stroke="url(#gBlue)" stroke-width="6"/><path d="M18 29.500q-4 0-4-4 0-3 4-3 2-6 6-5 4 1 4 5 2 1 2 4t-3 3z" fill="#fff"/></svg></div>
  <div class="cell"><svg width="30" height="30" viewBox="0 0 30 30"><rect width="30" height="30" rx="3" fill="#f3f4fc"/><path d="M2 7q5-2 8 2 3 3 5 2 2-7 12-9-1 3-3 4 1 1 0 3 1 2-2 4 0 6-7 8l6 4q-6-1-9-3-5-2-5-8 0-5-5-7z" fill="url(#gBird)"/><path d="M13 20q5 3 8 8-1-5-4-8z" fill="#a06bf5"/></svg></div>
  <div class="cell"><svg width="30" height="30" viewBox="0 0 30 30"><rect width="30" height="30" rx="3" fill="#00c808"/><path d="M3 8q0-3 3-3h18q3 0 3 3M3 22q0 3 3 3h18q3 0 3-3" fill="none" stroke="#fff" stroke-width="1.500"/><text x="3" y="21" font-size="16" font-weight="700" textLength="24" lengthAdjust="spacingAndGlyphs" fill="#fff">iQIYI</text></svg></div>
  <div class="cell"><svg width="28" height="28" viewBox="0 0 28 28"><circle cx="14" cy="15" r="13" fill="url(#gFox)"/><circle cx="14" cy="13" r="8" fill="#1a63c4"/><path d="M2 3l3 4 5-1q-2 3 1 5l-3 3q2 6 8 4 4-1 5-5 1 8-7 9Q3 22 2 3z" fill="#ff8a1a"/><path d="M17 0q4 5 5 10l3-4q4 12-5 19 3-9-1-14-3-5-2-11z" fill="#ffd23a"/></svg></div>
  <div class="cell run"><svg width="30" height="30" viewBox="0 0 30 30"><path d="M1 5l7-5 13 1 5 8 4 5-2 14-16 2-11-5z" fill="url(#gPy)"/><path d="M23 8l7 7-5 5z" fill="#16b7e0"/><path d="M5 5h19v19H5z" fill="#111"/><text x="6.500" y="15.500" font-size="11" font-weight="700" textLength="15" lengthAdjust="spacingAndGlyphs" fill="#fff">PC</text><path d="M7 20.500h7" stroke="#fff" stroke-width="1.500"/></svg></div>
  <div class="cell act"><svg width="28" height="28" viewBox="0 0 28 28"><path d="M13 5h14v18H13z" fill="#fff"/><path d="M19 13V8.500a4.500 4.500 0 1 0 4 4.500zM17 18.500h8M17 21h8" fill="#d24625" stroke="#d24625"/><path d="M0 3l16-3v28L0 25z" fill="#d24625"/><text x="3.500" y="19.500" font-size="14" font-weight="700" fill="#fff">P</text></svg></div>
  <div class="cell play"><svg width="30" height="32" viewBox="0 0 30 32"><path d="M3 0Q14-2 22 6q8 8 7 20-2 5-12 4-14-1-16-10-3-15 2-20z" fill="url(#gAudio)"/><circle cx="13" cy="15" r="6" fill="#d7dde0"/><path d="M15 14h4v17h-4zM24 14h4v17h-4z" fill="#ffe600" stroke="#443c00"/></svg></div>
  <svg class="tray" width="280" height="50" viewBox="1490 1030 280 50" fill="none" stroke="#fff" stroke-width="1.300">
    <circle cx="1512" cy="1049" r="3.500"/><circle cx="1504.500" cy="1056" r="3.500"/><path d="M1499.500 1064q1-5 5-5t4 5M1508 1055q3-4 6-1.500 2 1 3 3"/>
    <path d="M1545.500 1058.500l7.500-7.500 7.500 7.500"/>
    <path d="M1573.500 1052.500h3l4-4v14l-4-4h-3zM1584 1052q2 3 0 7M1587 1050q4 5 0 11"/><path d="M1590 1047q5 8 0 17" stroke="#777"/>
    <path d="M1607 1062q1-13 14-14M1611 1062q1-9 10-10M1615 1062q1-5 6-6"/><path d="M1618 1060h3v3h-3z" fill="#fff" stroke="none"/>
    <path d="M1635 1046h16v13h-16z" fill="#777" stroke="#bbb"/><path d="M1639 1048l8 8M1647 1048l-8 8" stroke="#f00" stroke-width="2.500"/><path d="M1634 1061h7v3h-7zM1644 1061h7v3h-7z" fill="#999" stroke="none"/>
    <path d="M1667.500 1049.500h14v12h-14zM1682.500 1053v5"/><path d="M1669 1051h11v9h-11z" fill="#fff" stroke="none"/><path d="M1664 1050h5v3l-2 2v5M1665 1048v2M1668 1048v2"/>
    <path d="M1695.500 1051.500h15v8h-15zM1703 1046v18"/>
    <rect x="1729" y="1046" width="18" height="17" rx="3" fill="#f15a24" stroke="none" transform="rotate(-8 1738 1055)"/><path d="M1743 1050q-9-2-9 2t5 3 2 5-8 0" stroke-width="3"/>
  </svg>
  <div class="clock"><span>11:19</span><span>2019/5/14</span></div>
  <svg class="note" width="75" height="50" viewBox="1845 1030 75 50"><path d="M1869 1045h20v16h-12l-4 4v-4h-4z" fill="#fff"/><path d="M1873 1049.500h12M1873 1053.500h12M1873 1057.500h8" stroke="#222"/><circle cx="1888.500" cy="1064" r="9.500" fill="#333" stroke="#999"/><text x="1888.500" y="1069" text-anchor="middle" font-size="14" font-weight="700" fill="#fff">2</text><path d="M1914.500 1030v50" stroke="#555"/></svg>
</footer>
</body>
</html>
```
FILE: styles.css
```css
* { box-sizing: border-box; }
body {
  margin: 0; width: 1920px; height: 1080px; overflow: hidden;
  display: flex; flex-direction: column;
  font-family: "Open Sans", "Noto Sans CJK SC", sans-serif;
  font-size: 15px; line-height: 20px; color: #262626; background: #e6e6e6;
}
svg { flex: none; display: block; }
svg text { font-family: "Noto Sans CJK SC", sans-serif; }
svg .mono text { font-family: "DejaVu Sans Mono", "Noto Sans CJK SC", monospace; }
svg .cap { font-size: 8.7px; font-weight: 500; }
.defs { position: absolute; }

/* title bar and tabs */
.titlebar { position: relative; height: 81px; flex: none; background: #b7472a; color: #fff; }
.art { position: absolute; right: 0; top: 0; }
.titlerow { position: relative; display: flex; height: 38px; align-items: center; }
.doc { margin: -2px 0 0 642px; width: 234px; white-space: nowrap; font-size: 15px; letter-spacing: .3px; }
.user { margin: -1px 0 0 524px; width: 110px; white-space: nowrap; font-size: 15.5px; }
.tabs { position: relative; display: flex; margin-top: 5px; height: 38px; align-items: stretch; line-height: 34px; }
.tab { padding: 0 13px 0 14px; white-space: nowrap; }
.tab.file { padding: 0 24px 0 22px; }
.tab.on { background: #f3f3f3; color: #b7472a; padding: 0 13px 0 12px; width: 55px; }
.bulb { margin: 8px 6px 0 14px; }
.tell { line-height: 36px; }
.share { display: flex; align-items: center; gap: 3px; margin-left: auto; margin-right: 24px; line-height: 38px; }

/* ribbon */
.ribbon { display: flex; height: 114px; flex: none; background: #f3f3f3; border-bottom: 1px solid #c9c9c9; padding-top: 4px; }
.group { height: 105px; border-right: 1px solid #d0d0d0; display: flex; flex-wrap: wrap; align-content: flex-start; justify-content: space-between; }
.body { width: 100%; height: 87px; display: flex; }
.label { line-height: 20px; }
.launch { margin: 9px 4px 0 0; color: #777; }
.launch.off { color: #aaa; }
.off { color: #adadad; }
.dd { color: #666; }
.off .dd { color: #b0b0b0; }
.big { display: flex; flex-direction: column; padding: 3px 0 0 14px; white-space: nowrap; }
.big > svg:first-child { margin: 0 0 -1px; height: 40px; }
.big > span { line-height: 20px; }
.big .low { margin: 9px 0 0 13px; }
.big.mid { align-items: center; padding: 3px 4px 0 0; }
.big.wide { padding-right: 0; }
.big.mid .low { margin-left: 2px; }
.two { display: flex; align-items: center; gap: 3px; }
.slides .big { padding-left: 7px; }
.slides .big > svg { margin-left: 7px !important; }
.slides .big > span:nth-child(2) { margin-left: 13px; }
.slides .col { margin-left: 8px; }
.col { display: flex; flex-direction: column; white-space: nowrap; margin-top: -1px; }
.col > div { display: flex; align-items: center; height: 28px; }
.col.tight { margin-top: -1px; }
.col.tight > div { height: 27px; }
.col .dd { margin-left: 3px; }
.col .dd.gap { margin-left: 9px; }
.swap { overflow: visible; }
.smart { letter-spacing: .3px; }
.rows { flex-direction: column; padding-left: 5px; }
.combos { display: flex; margin-top: 9px; height: 28px; }
.combos > svg { margin-left: 1px; }
.combo { display: flex; align-items: center; justify-content: space-between; background: #fdfdfd; border: 1px solid #c6c6c6; padding: 0 3px 0 4px; color: #999; }
.combo + .combo { margin-left: -1px; }
.combo .dd:only-child { margin-left: auto; }
.fmt { display: flex; align-items: center; height: 28px; margin-top: 8px; padding-left: 7px; font-size: 15px; color: #999; }
.fmt i { font-family: "Liberation Serif", serif; font-weight: 700; font-size: 17px; padding-left: 2px; }
.fmt u { font-weight: 600; }
.sh { text-shadow: 2px 1px 1px #bbb; font-size: 17px; }
.fmt s { font-size: 12px; }
.av { font-size: 12.5px; border-bottom: 1px solid #aaa; line-height: 18px; }
.fmt span + .dd { margin-left: 5px; }
.hl { overflow: visible; }
.para { margin-top: -2px; }
.gallery { margin: 1px 2px 0 6px; }
.collapse { margin: 95px 11px 0 auto; }

/* slide list */
.work { display: flex; height: 808px; flex: none; }
.panel { width: 281px; display: flex; border-right: 1px solid #c0c0c0; overflow: hidden; }
.list { width: 257px; height: 807px; overflow: hidden; padding-top: 12px; }
.scroll { margin-top: 2px; }
.item { display: flex; height: 132px; padding-left: 6px; margin-bottom: 23px; }
.num { width: 50px; font-size: 19px; line-height: 12px; letter-spacing: -.2px; color: #444; }
.thumb { width: 175px; height: 132px; border: 1px solid #c2c2c2; background: #fff; padding: 1px; flex: none; }
.item.cur { height: 136px; margin-bottom: 21px; }
.cur .num { width: 48px; color: #d24726; line-height: 17px; }
.cur .thumb { width: 179px; height: 136px; border: 3px solid #f0704f; }
.sect { display: flex; align-items: center; height: 20px; margin-bottom: 14px; font-size: 15px; color: #666; }
.sect i { width: 0; height: 0; border-left: 9px solid transparent; border-bottom: 9px solid #777; margin: 5px 10px 0 29px; }
.sect.second { margin-bottom: 14px; margin-top: 1px; }

/* slide canvas */
.stage { flex: 1; display: flex; border-bottom: 1px solid #c0c0c0; height: 805px; }
.slide { position: relative; width: 1032px; height: 775px; margin: 13px 0 0 294px; border: 1px solid #c6c6c6; background: #fff; flex: none; display: flex; flex-direction: column; }
.over { position: absolute; left: 0; top: 0; }
.vscroll { margin: 2px 0 0 auto; }
.shead { position: relative; display: flex; height: 62px; padding-left: 85px; }
.brand { width: 111px; padding-top: 30px; display: flex; flex-direction: column; }
.brand b { font-size: 19px; line-height: 20px; color: #444c4a; white-space: nowrap; }
.brand span { font: 12.4px/13px "Liberation Sans", sans-serif; color: #b7282b; white-space: nowrap; }
.slogan { display: flex; gap: 7px; font-size: 17.1px; line-height: 20px; margin-top: 29px; color: #333; white-space: nowrap; }
.slogan i { width: 1px; height: 18px; margin: 1px 0 0 0; background: #333; }
.motto { margin: 31px 27px 0 auto; font-size: 14.2px; line-height: 20px; color: #555; white-space: nowrap; }
h1 { position: relative; margin: 0; height: 100px; line-height: 99px; font-weight: 400; font-size: 52.5px; color: #000; padding-left: 271px; white-space: nowrap; letter-spacing: -.7px; }
h1 span { letter-spacing: -.6px; }
.table { position: relative; margin: 16px 0 0 191px; width: 633px; font: 15.5px/28px "Noto Sans CJK SC", sans-serif; color: #222; }
.th { display: flex; height: 23px; line-height: 23px; margin-bottom: 4.8px; padding-left: 5px; position: relative; }
.th svg { position: absolute; left: 0; top: 0; }
.th b { position: relative; width: 167px; flex: none; }
.tr { display: flex; height: 28.35px; padding-left: 5px; letter-spacing: .78px; white-space: nowrap; }
.tr span:first-child { width: 167px; flex: none; letter-spacing: -.2px; -webkit-text-stroke: .2px #222; }
.tr em { font-style: normal; letter-spacing: -.25px; -webkit-text-stroke: .2px #222; }
.tr.dense em { letter-spacing: -.5px; }
.tr.dense span:first-child { letter-spacing: -.1px; }
.tr.loose, .tr.loose em { letter-spacing: 1.35px; }
.tr.loose span:first-child { letter-spacing: 0; }
.tr.last { margin-top: -4px; }

/* status bar */
.status { display: flex; align-items: center; height: 27px; flex: none; background: #f3f3f3; border-top: 1px solid #c6c6c6; font-size: 15px; line-height: 18px; white-space: nowrap; }
.status span { margin-bottom: 3px; }
.s1 { margin-left: 8px; width: 214px; letter-spacing: .15px; }
.s2 { margin-right: 17px; }
.s3 { letter-spacing: -.1px; }
.sright { margin-left: auto; display: flex; align-items: center; }

/* taskbar */
.taskbar { display: flex; height: 50px; flex: none; color: #fff; background: linear-gradient(90deg, #15130c, #1a1409 35%, #241806 50%, #110f09 60%, #14120a 80%, #241806 88%, #12110b); }
.cell { width: 62px; display: flex; align-items: center; justify-content: center; flex: none; }
.sys { width: 60px; }
.sys.last { margin-right: 3px; }
.run { background: linear-gradient(#76b9ed, #76b9ed) center bottom / 51px 3px no-repeat; }
.act { background: #4b423c; border-bottom: 3px solid #76b9ed; padding-top: 3px; margin: 0 0 0 1px; width: 61px; }
.play { width: 51px; margin: 0 5px 0 6px; background: #35301f; border-left: 5px solid #75681a; border-bottom: 3px solid #ffe600; padding-top: 3px; }
.tray { margin-left: auto; }
.clock { width: 75px; display: flex; flex-direction: column; align-items: center; font-size: 15.4px; line-height: 23px; padding-top: 2px; }
```
